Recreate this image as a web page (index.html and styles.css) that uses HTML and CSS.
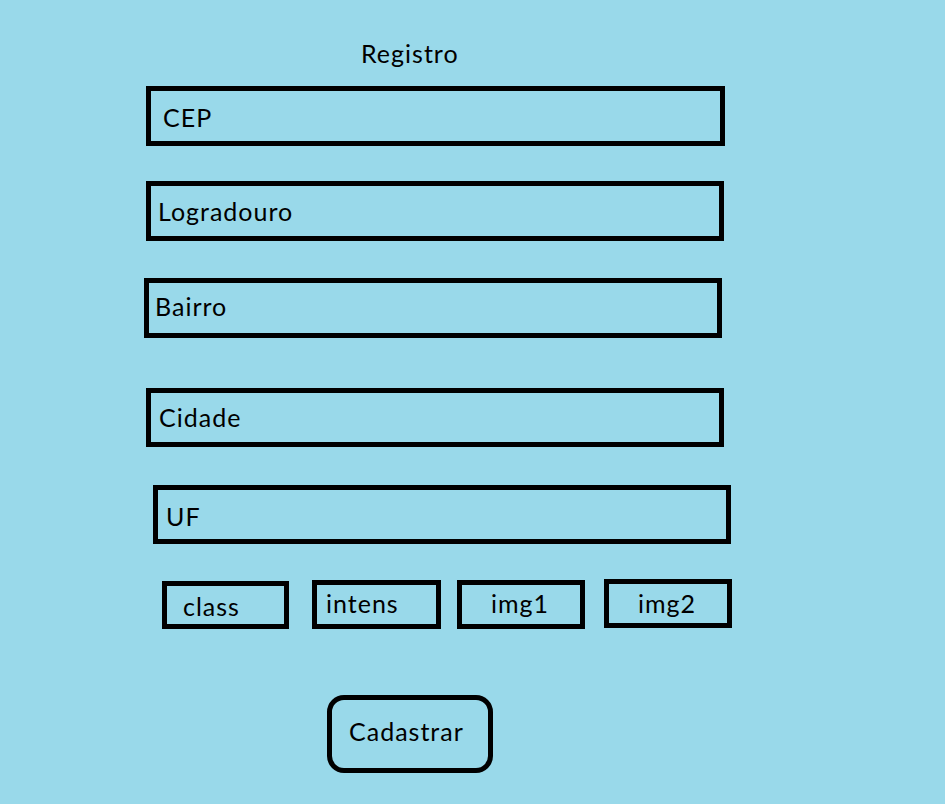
FILE: index.html
```html
<!DOCTYPE html>
<html lang="pt">
<head>
<meta charset="utf-8">
<title>Registro</title>
<link rel="stylesheet" href="styles.css">
</head>
<body>
<main class="page">
  <h1 class="title">Registro</h1>
  <div class="field f-cep"><span>CEP</span></div>
  <div class="field f-log"><span>Logradouro</span></div>
  <div class="field f-bairro"><span>Bairro</span></div>
  <div class="field f-cidade"><span>Cidade</span></div>
  <div class="field f-uf"><span>UF</span></div>
  <div class="small-row">
    <div class="small s-class"><span>class</span></div>
    <div class="small s-intens"><span>intens</span></div>
    <div class="small s-img1"><span>img1</span></div>
    <div class="small s-img2"><span>img2</span></div>
  </div>
  <button class="btn" type="button">Cadastrar</button>
</main>
</body>
</html>
```
FILE: styles.css
```css
html, body {
  margin: 0;
  padding: 0;
  background: #99d9ea;
}
body {
  width: 945px;
  height: 804px;
  overflow: hidden;
  font-family: Lato, "Open Sans", sans-serif;
  font-size: 25px;
  letter-spacing: 1px;
  color: #000;
}
.page {
  display: flex;
  flex-direction: column;
  align-items: flex-start;
  padding-top: 38px;
}
.title {
  margin: 0 0 0 361px;
  height: 30px;
  line-height: 30px;
  font-size: 25px;
  font-weight: normal;
}
.field {
  box-sizing: border-box;
  height: 60px;
  width: 578px;
  border: 5px solid #000;
  display: flex;
  align-items: center;
}
.f-cep { margin: 18px 0 0 146px; width: 579px; padding: 2px 0 0 12px; }
.f-log { margin: 35px 0 0 146px; padding: 0 0 0 7px; }
.f-bairro { margin: 37px 0 0 144px; padding: 0 0 5px 6px; }
.f-cidade { margin: 50px 0 0 146px; height: 59px; padding: 0 0 1px 8px; }
.f-uf { margin: 38px 0 0 153px; height: 59px; padding: 2px 0 0 8px; }

.small-row {
  display: flex;
  align-items: flex-start;
  margin: 35px 0 0 0;
}
.small {
  box-sizing: border-box;
  border: 5px solid #000;
  height: 49px;
  width: 128px;
  display: flex;
  align-items: center;
}
.s-class { margin: 2px 0 0 162px; width: 127px; height: 48px; padding: 1px 0 0 16px; }
.s-intens { margin: 1px 0 0 23px; width: 129px; padding: 0 0 4px 9px; }
.s-img1 { margin: 1px 0 0 16px; padding: 0 0 4px 29px; }
.s-img2 { margin: 0 0 0 19px; padding: 0 0 1px 29px; }

.btn {
  box-sizing: border-box;
  margin: 66px 0 0 327px;
  width: 166px;
  height: 78px;
  border: 5px solid #000;
  border-radius: 17px;
  background: transparent;
  font-family: Lato, "Open Sans", sans-serif;
  font-size: 25px;
  letter-spacing: 1px;
  color: #000;
  text-align: left;
  padding: 0 0 7px 17px;
}
```
